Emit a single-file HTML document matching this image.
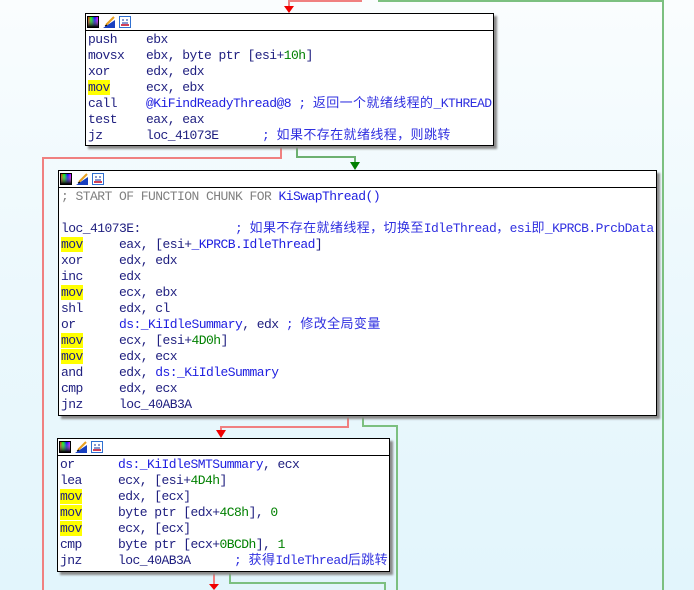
<!DOCTYPE html>
<html><head><meta charset="utf-8"><style>
body{margin:0;width:694px;height:590px;overflow:hidden;position:relative;background:linear-gradient(to bottom,#fafdfe 0%,#eef9fd 40%,#e2f5fc 100%);font-family:"Liberation Mono","Noto Sans CJK SC",monospace;font-size:13px;letter-spacing:-0.55px;}
.box{position:absolute;background:#fff;border:1px solid #000;box-shadow:3px 3px 2px #8a8a8a;}
.hdr{height:16px;border-bottom:1px solid #000;position:relative;}
.ic{position:absolute;top:2px;width:12px;height:12px;}
.l{position:absolute;left:2px;height:16px;line-height:16px;white-space:pre;color:#202080;}
.y{background:#ffff00;}
.n{color:#2020e0}
.g{color:#008000}
.c{color:#3030e0}
.k{font-size:13px;letter-spacing:0.4px}
.gr{color:#808080}
.ln{position:absolute;}
</style></head><body>
<svg class="ln" width="694" height="590" style="left:0;top:0">
<defs><linearGradient id="a" x1="0" x2="1"><stop offset="0" stop-color="#f00"/><stop offset=".33" stop-color="#0f0"/><stop offset=".66" stop-color="#00f"/><stop offset="1" stop-color="#f0f"/></linearGradient><linearGradient id="b" x1="0" y1="0" x2="0" y2="1"><stop offset="0" stop-color="#fff" stop-opacity="0"/><stop offset="1" stop-color="#000"/></linearGradient></defs>
<g fill="none" stroke-width="2">
<path d="M362 1H289V8" stroke="#f08080"/>
<path d="M378 1H663V590" stroke="#7cc080"/>
<path d="M281 146V158H43V590" stroke="#f08080"/>
<path d="M297 146V157H355V163" stroke="#6cb070"/>
<path d="M348 416V427H221V431" stroke="#f08080"/>
<path d="M363 416V426H397V590" stroke="#7cc080"/>
<path d="M214 571V584" stroke="#f08080"/>
<path d="M230 571V583H385V590" stroke="#7cc080"/>
</g>
<path d="M284 6h10l-5 7z" fill="#f00000"/>
<path d="M350 162h10l-5 8z" fill="#008000"/>
<path d="M216 430h10l-5 8z" fill="#f00000"/>
<path d="M209 584h10l-5 6z" fill="#f00000"/>
</svg>

<div class="box" style="left:85px;top:13px;width:407px;height:131px">
<div class="hdr">
<svg class="ic" style="left:1px" viewBox="0 0 12 12"><rect x=".5" y=".5" width="11" height="11" fill="url(#a)" stroke="#000"/><rect x="1" y="1" width="10" height="10" fill="url(#b)"/></svg>
<svg class="ic" style="left:17px" viewBox="0 0 12 12"><path d="M0 12L12 4V12Z" fill="#1840c0"/><path d="M3 9L11 1" stroke="#e8a020" stroke-width="2"/><path d="M2 10l2-1" stroke="#000"/></svg>
<svg class="ic" style="left:33px" viewBox="0 0 12 12"><rect x=".5" y=".5" width="11" height="11" fill="#fff" stroke="#3070d0"/><path d="M3 4h2M7 4h2M3 7h6" stroke="#1030a0"/><path d="M2 9h8" stroke="#c00020" stroke-width="1.5"/></svg>
</div>
<div class="l" style="top:18px">push    ebx</div>
<div class="l" style="top:34px">movsx   ebx, byte ptr [esi+<span class="g">10h</span>]</div>
<div class="l" style="top:50px">xor     edx, edx</div>
<div class="l" style="top:66px"><span class="y">mov</span>     ecx, ebx</div>
<div class="l" style="top:82px">call    <span class="n">@KiFindReadyThread@8</span> <span class="c">; <span class="k">返回一个就绪线程的</span>_KTHREAD</span></div>
<div class="l" style="top:98px">test    eax, eax</div>
<div class="l" style="top:114px">jz      loc_41073E      <span class="c">; <span class="k">如果不存在就绪线程，则跳转</span></span></div>
</div>

<div class="box" style="left:58px;top:170px;width:597px;height:244px">
<div class="hdr">
<svg class="ic" style="left:1px" viewBox="0 0 12 12"><rect x=".5" y=".5" width="11" height="11" fill="url(#a)" stroke="#000"/><rect x="1" y="1" width="10" height="10" fill="url(#b)"/></svg>
<svg class="ic" style="left:17px" viewBox="0 0 12 12"><path d="M0 12L12 4V12Z" fill="#1840c0"/><path d="M3 9L11 1" stroke="#e8a020" stroke-width="2"/><path d="M2 10l2-1" stroke="#000"/></svg>
<svg class="ic" style="left:33px" viewBox="0 0 12 12"><rect x=".5" y=".5" width="11" height="11" fill="#fff" stroke="#3070d0"/><path d="M3 4h2M7 4h2M3 7h6" stroke="#1030a0"/><path d="M2 9h8" stroke="#c00020" stroke-width="1.5"/></svg>
</div>
<div class="l" style="top:18px"><span class="gr">; START OF FUNCTION CHUNK FOR </span><span class="n">KiSwapThread()</span></div>
<div class="l" style="top:50px">loc_41073E:             <span class="c">; <span class="k">如果不存在就绪线程，切换至</span>IdleThread<span class="k">，</span>esi<span class="k">即</span>_KPRCB.PrcbData</span></div>
<div class="l" style="top:66px"><span class="y">mov</span>     eax, [esi+<span class="n">_KPRCB.IdleThread</span>]</div>
<div class="l" style="top:82px">xor     edx, edx</div>
<div class="l" style="top:98px">inc     edx</div>
<div class="l" style="top:114px"><span class="y">mov</span>     ecx, ebx</div>
<div class="l" style="top:130px">shl     edx, cl</div>
<div class="l" style="top:146px">or      <span class="n">ds:_KiIdleSummary</span>, edx <span class="c">; <span class="k">修改全局变量</span></span></div>
<div class="l" style="top:162px"><span class="y">mov</span>     ecx, [esi+<span class="g">4D0h</span>]</div>
<div class="l" style="top:178px"><span class="y">mov</span>     edx, ecx</div>
<div class="l" style="top:194px">and     edx, <span class="n">ds:_KiIdleSummary</span></div>
<div class="l" style="top:210px">cmp     edx, ecx</div>
<div class="l" style="top:226px">jnz     loc_40AB3A</div>
</div>

<div class="box" style="left:57px;top:438px;width:331px;height:132px">
<div class="hdr">
<svg class="ic" style="left:1px" viewBox="0 0 12 12"><rect x=".5" y=".5" width="11" height="11" fill="url(#a)" stroke="#000"/><rect x="1" y="1" width="10" height="10" fill="url(#b)"/></svg>
<svg class="ic" style="left:17px" viewBox="0 0 12 12"><path d="M0 12L12 4V12Z" fill="#1840c0"/><path d="M3 9L11 1" stroke="#e8a020" stroke-width="2"/><path d="M2 10l2-1" stroke="#000"/></svg>
<svg class="ic" style="left:33px" viewBox="0 0 12 12"><rect x=".5" y=".5" width="11" height="11" fill="#fff" stroke="#3070d0"/><path d="M3 4h2M7 4h2M3 7h6" stroke="#1030a0"/><path d="M2 9h8" stroke="#c00020" stroke-width="1.5"/></svg>
</div>
<div class="l" style="top:18px">or      <span class="n">ds:_KiIdleSMTSummary</span>, ecx</div>
<div class="l" style="top:34px">lea     ecx, [esi+<span class="g">4D4h</span>]</div>
<div class="l" style="top:50px"><span class="y">mov</span>     edx, [ecx]</div>
<div class="l" style="top:66px"><span class="y">mov</span>     byte ptr [edx+<span class="g">4C8h</span>], <span class="g">0</span></div>
<div class="l" style="top:82px"><span class="y">mov</span>     ecx, [ecx]</div>
<div class="l" style="top:98px">cmp     byte ptr [ecx+<span class="g">0BCDh</span>], <span class="g">1</span></div>
<div class="l" style="top:114px">jnz     loc_40AB3A      <span class="c">; <span class="k">获得</span>IdleThread<span class="k">后跳转</span></span></div>
</div>
</body></html>
